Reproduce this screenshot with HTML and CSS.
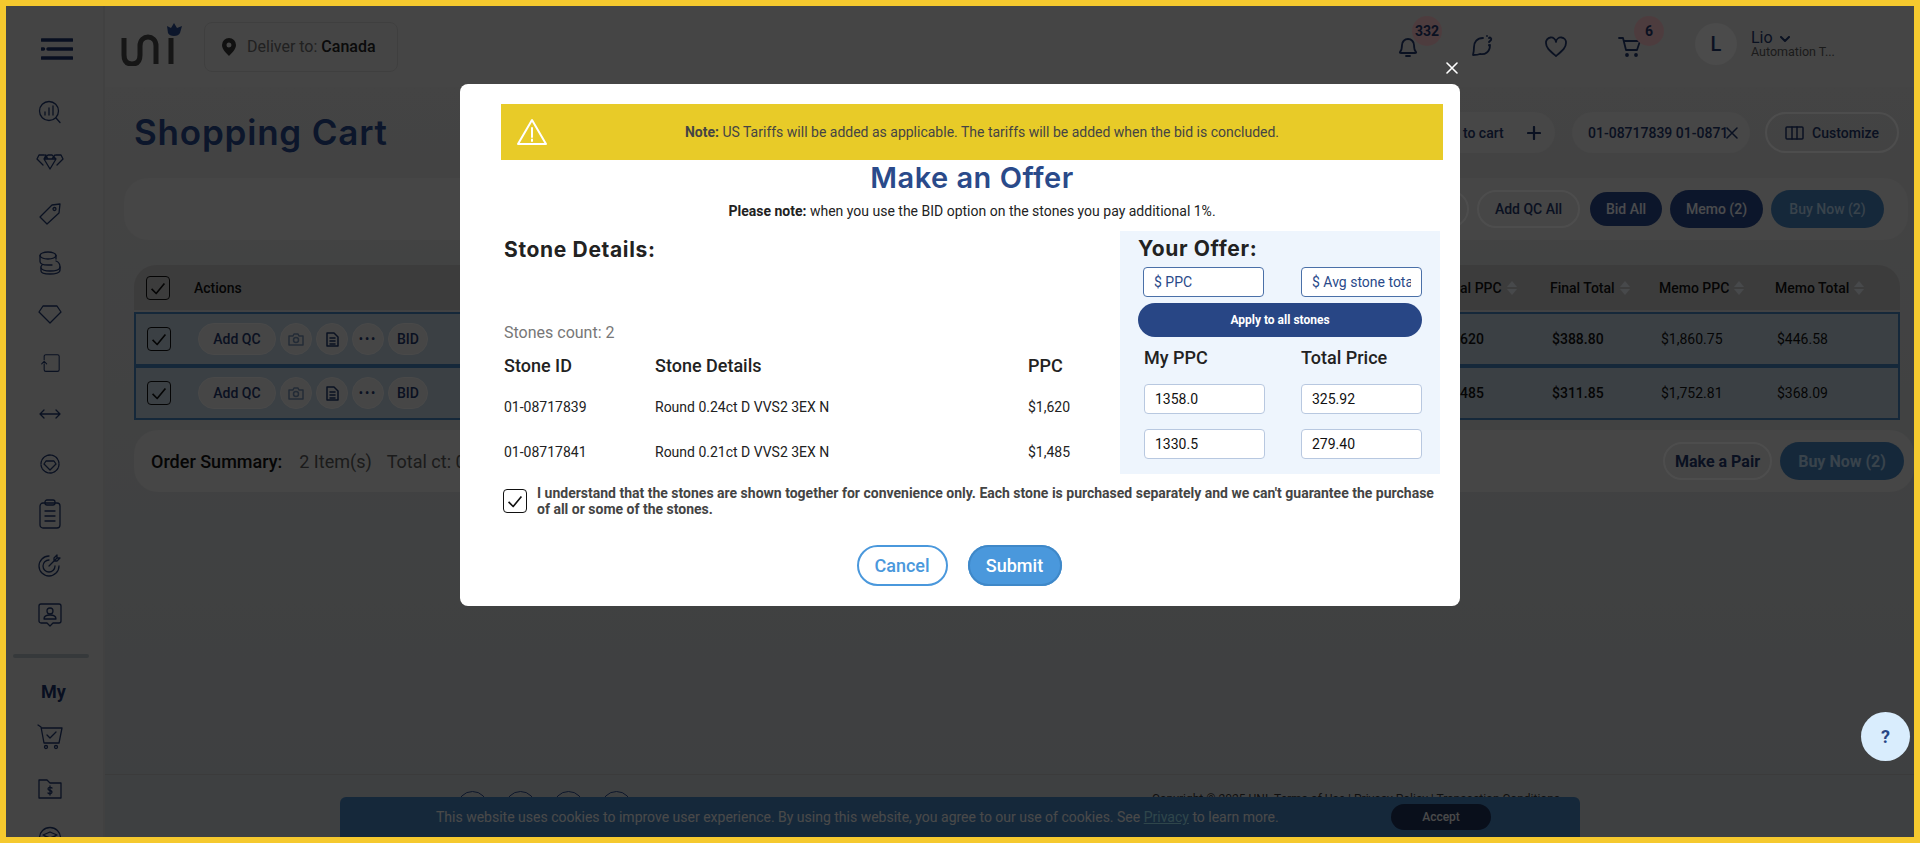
FILE: index.html
```html
<!DOCTYPE html>
<html lang="en">
<head>
  <meta charset="UTF-8" />
  <title>Shopping Cart</title>
  <link rel="stylesheet" href="styles.css">
</head>
<body>
  <div class="frame">
    <!-- sidebar -->
    <aside class="rail">
      <svg class="burger" width="32" height="22" viewBox="0 0 32 22"><path d="M1 2h30M7 11h24M1 20h30M1 11h1.500" /></svg>
      <div class="rail-list">
        <svg class="ico" viewBox="0 0 24 24"><circle cx="11" cy="11" r="9.500"/><path d="M18 18l4 4.500M7 15v-3M11 15V8M15 15V6"/></svg>
        <svg class="ico wide" viewBox="0 0 28 16"><path d="M8 1H3L1 5l6 6M20 1h5l2 4-6 6M8 5l4-4h4l4 4-6 10-6-10 2-4M8 5h12M9 1l3 4M19 1l-3 4"/></svg>
        <svg class="ico" viewBox="0 0 24 24"><path d="M2 16L14 4l8-1-1 9L9 23z"/><circle cx="16.500" cy="8" r="1.500"/></svg>
        <svg class="ico" viewBox="0 0 24 24"><ellipse cx="10" cy="4.500" rx="8" ry="3.500"/><path d="M2 4.500v6c0 2 3 3.500 8 3.500h4M18 4.500V8M4 14c-1 1-1.500 2-1 3 1 2 4 3 9 3s10-1 10-4-1-5-4-6"/><path d="M3 17v3c0 2 4 3 9 3s10-1 10-4v-3"/></svg>
        <svg class="ico" viewBox="0 0 24 24"><path d="M5 5h14l4 6-11 11L1 11z"/></svg>
        <svg class="ico sm" viewBox="0 0 24 24"><path d="M5 8V4a2 2 0 0 1 2-2h14a2 2 0 0 1 2 2v16a2 2 0 0 1-2 2H7a2 2 0 0 1-2-2v-7M2 13l3-3 3 3"/></svg>
        <svg class="ico" viewBox="0 0 24 24"><path d="M2 12h20M6 8l-4 4 4 4M18 8l4 4-4 4"/></svg>
        <svg class="ico" viewBox="0 0 24 24"><circle cx="12" cy="12" r="9" stroke-dasharray="3 1"/><path d="M8 9h8l2 3-6 6-6-6z"/></svg>
        <svg class="ico tall" viewBox="0 0 24 30"><rect x="2" y="4" width="20" height="25" rx="3"/><rect x="7" y="1" width="10" height="5" rx="2"/><path d="M7 12h10M7 17h10M7 22h10"/></svg>
        <svg class="ico" viewBox="0 0 24 24"><path d="M21 13a10 10 0 1 1-10-10M17 13a6 6 0 1 1-6-6M11 13l8-8M16 5l3-3v3h3l-3 3h-3z"/></svg>
        <svg class="ico" viewBox="0 0 24 24"><path d="M3 1h18a2 2 0 0 1 2 2v15a2 2 0 0 1-2 2h-6l-3 3-3-3H3a2 2 0 0 1-2-2V3a2 2 0 0 1 2-2z"/><circle cx="12" cy="8" r="3"/><path d="M6 16c0-3 3-4 6-4s6 1 6 4z"/></svg>
      </div>
      <div class="rail-rule"></div>
      <div class="rail-my">My</div>
      <div class="rail-list rail-my-list">
        <svg class="ico big" viewBox="0 0 26 26"><path d="M1 1l3 2 3 16h15l3-15H5M10 11l3 3 6-6"/><circle cx="9" cy="23" r="1.500"/><circle cx="19" cy="23" r="1.500"/></svg>
        <svg class="ico" viewBox="0 0 24 24"><path d="M1 4h8l3 3h11v15H1zM12 7h11"/><path d="M14 12c-1-1-4-1-4 1s4 1 4 3-3 2-4 1M12 10v9"/></svg>
        <svg class="ico" viewBox="0 0 24 24"><circle cx="12" cy="12" r="10.500"/><path d="M5 9l7-3 7 3-7 3zM7 11v6l5 2 5-2v-6"/></svg>
      </div>
    </aside>

    <div class="main">
      <!-- top bar -->
      <header class="topbar">
        <svg class="logo" width="62" height="44" viewBox="0 0 62 44">
          <path class="logo-uni" d="M3 16v17c0 6 3 9 8 9s8-3 8-9V24c0-6 4-9 8-9s8 3 8 9v18M50 16v26" />
          <circle class="logo-dot" cx="50" cy="10" r="2.500" />
          <path class="logo-crown" d="M46 4l4 2 3-5 3 5 5-2-2 7c-1 2-3 3-6 3s-5-1-6-3z" />
        </svg>
        <div class="deliver">
          <svg width="14" height="18" viewBox="0 0 14 18"><path class="pin" fill-rule="evenodd" d="M7 0a7 7 0 0 1 7 7c0 4-4 8-7 11-3-3-7-7-7-11a7 7 0 0 1 7-7zm0 4.500a2.500 2.500 0 1 0 0 5 2.500 2.500 0 0 0 0-5z"/></svg>
          <span>Deliver to: <b>Canada</b></span>
        </div>
        <div class="top-icons">
          <div class="top-ico">
            <svg width="22" height="22" viewBox="0 0 22 22"><path d="M3 16c2-2 2-4 2-7a6 6 0 0 1 12 0c0 3 0 5 2 7 .5 1 0 1-1 1H4c-1 0-1.500 0-1-1zM9 20h4"/></svg>
            <span class="badge">332</span>
          </div>
          <div class="top-ico">
            <svg width="22" height="24" viewBox="0 0 22 24"><path d="M12 3C6 3 3 7 3 12c0 2 0 4-1 8 3 0 5 0 7-1 5 1 10-2 10-9M16 1v0M18 3c1-1 3 0 2 2l-2 2M18 10v.500"/></svg>
          </div>
          <div class="top-ico">
            <svg width="24" height="22" viewBox="0 0 24 22"><path d="M12 20C6 15 2 12 2 7a5 5 0 0 1 10-1 5 5 0 0 1 10 1c0 5-4 8-10 13z"/></svg>
          </div>
          <div class="top-ico">
            <svg width="24" height="22" viewBox="0 0 24 22"><path d="M1 2h4l3 12h11l3-9H6"/><circle cx="9" cy="19" r="1"/><circle cx="18" cy="19" r="1"/></svg>
            <span class="badge">6</span>
          </div>
        </div>
        <div class="avatar">L</div>
        <div class="user">
          <div class="user-name">Lio <svg width="10" height="7" viewBox="0 0 10 7"><path d="M1 1l4 4 4-4"/></svg></div>
          <div class="user-role">Automation T...</div>
        </div>
      </header>

      <!-- page -->
      <main class="content">
        <div class="title-row">
          <h1>Shopping Cart</h1>
          <div class="title-tools">
            <div class="pill-light add-cart">Add to cart <svg width="14" height="14" viewBox="0 0 14 14"><path d="M7 1v12M1 7h12"/></svg></div>
            <div class="pill-light stone-search"><span>01-08717839 01-08717841</span><svg width="12" height="12" viewBox="0 0 12 12"><path d="M1 1l10 10M11 1L1 11"/></svg></div>
            <div class="pill customize"><svg width="19" height="14" viewBox="0 0 19 14"><rect x="1" y="1" width="17" height="12" rx="1"/><path d="M7 1v12M12 1v12"/></svg>Customize</div>
          </div>
        </div>

        <div class="bulk-bar">
          <div class="pill bulk-btn">Add All</div>
          <div class="pill bulk-btn">Add QC All</div>
          <div class="solid bid-all">Bid All</div>
          <div class="solid memo">Memo (2)</div>
          <div class="solid blue">Buy Now (2)</div>
        </div>

        <div class="cart-table">
          <div class="cart-head">
            <span class="check"><svg viewBox="0 0 24 24"><path d="M5 13l5 5 9-11"/></svg></span>
            <span class="head-actions">Actions</span>
            <span class="sort">Final PPC <i></i></span>
            <span class="sort">Final Total <i></i></span>
            <span class="sort">Memo PPC <i></i></span>
            <span class="sort">Memo Total <i></i></span>
          </div>
          <div class="cart-row">
            <span class="check"><svg viewBox="0 0 24 24"><path d="M5 13l5 5 9-11"/></svg></span>
            <div class="row-actions">
              <span class="act act-qc">Add QC</span>
              <span class="act"><svg width="16" height="14" viewBox="0 0 16 14"><path d="M1 4h4l1-2h4l1 2h4v9H1z"/><circle cx="8" cy="8" r="2.500"/></svg></span>
              <span class="act"><svg class="doc" width="13" height="15" viewBox="0 0 13 15"><path d="M1 1h7l4 4v9H1zM4 6h5M4 9h5M4 12h5"/></svg></span>
              <span class="act dots">•••</span>
              <span class="act act-bid">BID</span>
            </div>
            <b>$1,620</b><b>$388.80</b><span>$1,860.75</span><span>$446.58</span>
          </div>
          <div class="cart-row">
            <span class="check"><svg viewBox="0 0 24 24"><path d="M5 13l5 5 9-11"/></svg></span>
            <div class="row-actions">
              <span class="act act-qc">Add QC</span>
              <span class="act"><svg width="16" height="14" viewBox="0 0 16 14"><path d="M1 4h4l1-2h4l1 2h4v9H1z"/><circle cx="8" cy="8" r="2.500"/></svg></span>
              <span class="act"><svg class="doc" width="13" height="15" viewBox="0 0 13 15"><path d="M1 1h7l4 4v9H1zM4 6h5M4 9h5M4 12h5"/></svg></span>
              <span class="act dots">•••</span>
              <span class="act act-bid">BID</span>
            </div>
            <b>$1,485</b><b>$311.85</b><span>$1,752.81</span><span>$368.09</span>
          </div>
        </div>

        <div class="summary">
          <b>Order Summary:</b>
          <span class="sum-item">2 Item(s)</span>
          <span class="sum-item sum-ct">Total ct: 0.45</span>
          <div class="pill pair">Make a Pair</div>
          <div class="solid blue buy">Buy Now (2)</div>
        </div>
      </main>

      <footer class="foot">
        <div class="foot-social"><span></span><span></span><span></span><span></span></div>
        <div class="foot-copy">Copyright © 2025 UNI. Terms of Use | Privacy Policy | Transaction Conditions</div>
      </footer>
    </div>

    <div class="cookie">
      <span>This website uses cookies to improve user experience. By using this website, you agree to our use of cookies. See <u>Privacy</u> to learn more.</span>
      <span class="accept">Accept</span>
    </div>

    <div class="backdrop"></div>

    <svg class="close" width="12" height="12" viewBox="0 0 12 12"><path d="M1 1l10 10M11 1L1 11"/></svg>

    <!-- offer dialog -->
    <section class="modal">
      <div class="note-bar">
        <svg width="32" height="28" viewBox="0 0 32 28"><path d="M16 2L2 26h28zM16 10v9M16 21.500v1.500"/></svg>
        <p><b>Note:</b> US Tariffs will be added as applicable. The tariffs will be added when the bid is concluded.</p>
      </div>
      <h2>Make an Offer</h2>
      <p class="bid-note"><b>Please note:</b> when you use the BID option on the stones you pay additional 1%.</p>

      <div class="offer-grid">
        <div class="stones">
          <h3>Stone Details:</h3>
          <div class="stones-count">Stones count: 2</div>
          <div class="stones-table">
            <strong>Stone ID</strong><strong>Stone Details</strong><strong>PPC</strong>
            <span>01-08717839</span><span>Round 0.24ct D VVS2 3EX N</span><span>$1,620</span>
            <span>01-08717841</span><span>Round 0.21ct D VVS2 3EX N</span><span>$1,485</span>
          </div>
        </div>

        <div class="offer">
          <h3>Your Offer:</h3>
          <div class="offer-top">
            <input type="text" placeholder="$ PPC" />
            <input type="text" placeholder="$ Avg stone total" />
          </div>
          <button class="apply" type="button">Apply to all stones</button>
          <div class="offer-fields">
            <strong>My PPC</strong><strong>Total Price</strong>
            <input type="text" value="1358.0" /><input type="text" value="325.92" />
            <input type="text" value="1330.5" /><input type="text" value="279.40" />
          </div>
        </div>
      </div>

      <div class="agree">
        <span class="check"><svg viewBox="0 0 24 24"><path d="M5 13l5 5 9-11"/></svg></span>
        <p>I understand that the stones are shown together for convenience only. Each stone is purchased separately and we can't guarantee the purchase of all or some of the stones.</p>
      </div>

      <div class="modal-btns">
        <button class="btn-cancel" type="button">Cancel</button>
        <button class="btn-submit" type="button">Submit</button>
      </div>
    </section>

    <div class="help">?</div>
  </div>
</body>
</html>
```

FILE: styles.css
```css
* {
  box-sizing: border-box;
}
html, body {
  margin: 0;
  height: 100%;
}
body {
  font-family: Roboto, 'Liberation Sans', sans-serif;
  font-size: 14px;
  color: #111;
  overflow: hidden;
}
svg {
  fill: none;
  stroke: #1f3568;
  stroke-width: 1.5;
  stroke-linecap: round;
  stroke-linejoin: round;
  flex: none;
}
h1, h2, h3, p {
  margin: 0;
}

.frame {
  position: relative;
  display: flex;
  height: 100vh;
  border: 6px solid #f5c92e;
  overflow: hidden;
  background: #d0d0d0;
}

/* sidebar */
.rail {
  width: 99px;
  flex: none;
  display: flex;
  flex-direction: column;
  align-items: center;
  padding-top: 32px;
  background: #d4d4d4;
  border-right: 2px solid #cbcbcb;
}
.rail > * {
  flex: none;
}
.burger {
  margin-left: 5px;
  stroke: #1a2f63;
  stroke-width: 3.5;
}
.rail-list {
  display: flex;
  flex-direction: column;
  align-items: center;
  gap: 26.300px;
  margin-top: 40px;
  margin-right: 10px;
}
.ico {
  width: 24px;
  height: 24px;
  stroke-width: 1.300;
}
.ico.wide {
  width: 28px;
  height: 16px;
  margin: 4px 0;
}
.ico.tall {
  height: 30px;
  margin: -3px 0;
}
.ico.big {
  width: 26px;
  height: 26px;
}
.ico.sm {
  width: 20px;
  height: 20px;
  margin: 2px 0;
}
.rail-rule {
  width: 76px;
  height: 4px;
  margin: 27px 0 0 -8px;
  border-radius: 2px;
  background: #a7b0b8;
}
.rail-my {
  margin: 23px 0 0 -2px;
  font-size: 18px;
  font-weight: 700;
  color: #1a2f63;
}
.rail-my-list {
  gap: 26px;
  margin-top: 22px;
}

.main {
  flex: 1;
  min-width: 0;
  display: flex;
  flex-direction: column;
}

/* top bar */
.topbar {
  height: 81px;
  flex: none;
  display: flex;
  align-items: center;
  padding: 0 0 0 16px;
  background: #d6d6d6;
}
.logo {
  margin-top: -5px;
}
.logo-uni {
  stroke: #444;
  stroke-width: 5;
  stroke-linecap: butt;
}
.logo-dot {
  fill: #444;
  stroke: none;
}
.logo-crown {
  fill: #284685;
  stroke: none;
}
.deliver {
  display: flex;
  align-items: center;
  gap: 11px;
  width: 194px;
  height: 50px;
  margin-left: 21px;
  padding-left: 17px;
  border: 1.500px solid #c4c4c4;
  border-radius: 8px;
  font-size: 16px;
  color: #666;
}
.deliver b {
  color: #222;
  font-weight: 500;
}
.pin {
  fill: #333;
  stroke: none;
}
.top-icons {
  display: flex;
  margin-left: auto;
}
.top-ico {
  position: relative;
  width: 74px;
  height: 24px;
  display: flex;
  align-items: center;
  justify-content: center;
}
.top-ico svg {
  stroke-width: 1.800;
}
.badge {
  position: absolute;
  left: 41px;
  top: -19px;
  width: 30px;
  height: 30px;
  display: flex;
  align-items: center;
  justify-content: center;
  border-radius: 50%;
  background: #f0bcc2;
  font-size: 14px;
  font-weight: 700;
  color: #1f3568;
}
.avatar {
  width: 42px;
  height: 42px;
  margin: -6px 0 0 28px;
  display: flex;
  align-items: center;
  justify-content: center;
  border-radius: 50%;
  background: #e8e8e8;
  font-size: 20px;
  font-weight: 500;
  color: #1f3568;
}
.user {
  width: 163px;
  margin: -6px 0 0 14px;
  color: #1f3568;
}
.user-name {
  font-size: 16px;
  line-height: 15px;
}
.user-name svg {
  margin-left: 3px;
  stroke-width: 2;
}
.user-role {
  font-size: 12.500px;
  line-height: 13px;
  color: #555;
}

/* page */
.content {
  flex: 1;
  padding: 25px 0 0 29px;
  background: linear-gradient(#d2d2d2, #c2c6c9);
}
.title-row {
  display: flex;
  justify-content: space-between;
  align-items: center;
  height: 41px;
  margin-right: 15px;
}
h1 {
  margin-bottom: 2px;
  font-family: Inter, sans-serif;
  font-size: 35px;
  font-weight: 600;
  letter-spacing: .8px;
  color: #284685;
}
.title-tools {
  display: flex;
  align-items: center;
}
.pill, .pill-light, .solid {
  display: flex;
  align-items: center;
  justify-content: center;
  border-radius: 24px;
  font-weight: 500;
  color: #1f3568;
}
.pill {
  border: 2px solid #f0f0f0;
  background: #dadada;
}
.pill-light {
  background: #dbdbdb;
}
.add-cart {
  gap: 23px;
  width: 148px;
  height: 41px;
  margin-right: 17px;
  padding-left: 13px;
}
.add-cart svg {
  stroke-width: 2.200;
}
.stone-search {
  width: 178px;
  height: 41px;
  margin-right: 15px;
  justify-content: flex-start;
  padding-left: 16px;
}
.stone-search span {
  width: 138px;
  white-space: nowrap;
  overflow: hidden;
}
.customize {
  gap: 8px;
  width: 134px;
  height: 41px;
  background: transparent;
}
.bulk-bar {
  display: flex;
  align-items: center;
  justify-content: flex-end;
  gap: 8px;
  height: 62px;
  margin: 25px 6px 0 -10px;
  padding-right: 24px;
  background: #d8d8d8;
  border-radius: 24px;
}
.bulk-btn {
  height: 38px;
  width: 103px;
  background: transparent;
}
.solid {
  height: 38px;
  background: #284685;
  color: #e6e9f0;
}
.bid-all {
  width: 72px;
  height: 34px;
  margin-left: 2px;
}
.memo {
  width: 93px;
}
.blue {
  width: 113px;
  background: #427db5;
  color: #b0d0ea;
}

/* cart table */
.cart-table {
  margin: 25px 14px 0 0;
}
.cart-head, .cart-row {
  display: grid;
  align-items: center;
}
.cart-head {
  height: 45px;
  padding-left: 12px;
  margin-bottom: 2px;
  border-radius: 22px 22px 0 0;
  background: #bcbcbc;
  font-weight: 500;
  color: #111;
  grid-template-columns: 48px 1fr 109px 109px 116px 125px;
}
.sort {
  display: flex;
  align-items: center;
  gap: 5px;
  white-space: nowrap;
}
.sort i {
  display: flex;
  flex-direction: column;
  gap: 2px;
}
.sort i::before, .sort i::after {
  content: '';
  border-left: 5.500px solid transparent;
  border-right: 5.500px solid transparent;
}
.sort i::before {
  border-bottom: 6px solid #dde2e8;
}
.sort i::after {
  border-top: 6px solid #dde2e8;
}
.cart-row {
  height: 54px;
  padding-left: 11px;
  border: 2px solid #427db5;
  background: #b8c8d4;
  grid-template-columns: 51px 1fr 111px 109px 116px 121px;
}
.cart-row b {
  font-weight: 500;
}
.check {
  width: 24px;
  height: 24px;
  display: block;
  border: 1.500px solid #111;
  border-radius: 4px;
  background: #fff;
}
.check svg {
  display: block;
  stroke: #111;
  stroke-width: 1.800;
  stroke-linecap: butt;
}
.cart-head .check, .cart-row .check {
  background: transparent;
}
.row-actions {
  display: flex;
  gap: 4px;
}
.act {
  width: 32px;
  height: 32px;
  display: flex;
  align-items: center;
  justify-content: center;
  border: 1.500px solid #e2e2e2;
  border-radius: 16px;
  background: #d8d8d8;
  font-weight: 500;
  font-size: 14px;
  color: #1f3568;
}
.act svg {
  stroke: #6e87a8;
}
.act svg.doc {
  stroke: #1f3568;
}
.act-qc {
  width: 78px;
}
.act-bid {
  width: 40px;
}
.dots {
  font-size: 12px;
  letter-spacing: 2px;
}

.summary {
  display: flex;
  align-items: center;
  height: 62px;
  margin: 10px 0 0 0;
  padding: 0 10px 0 17px;
  border-radius: 24px;
  background: #d8d8d8;
  font-size: 18px;
}
.summary b {
  font-weight: 500;
}
.sum-item {
  margin-left: 17px;
  color: #555;
}
.sum-ct {
  margin-left: 15px;
}
.pair {
  width: 109px;
  height: 38px;
  margin-left: auto;
  font-size: 16px;
  font-weight: 700;
  background: transparent;
}
.buy {
  width: 124px;
  margin-left: 8px;
  font-size: 16px;
  font-weight: 700;
}

/* footer */
.foot {
  height: 63px;
  flex: none;
  display: flex;
  padding: 16px 48px 0 352px;
  border-top: 1px solid #b8b8b8;
  background: #c2c6c9;
  font-size: 12px;
}
.foot-social {
  display: flex;
  gap: 17px;
}
.foot-social span {
  width: 31px;
  height: 31px;
  border: 1.500px solid #284685;
  border-radius: 50%;
}
.foot-copy {
  margin: 1px 306px 0 auto;
  color: #333;
}

.cookie {
  position: absolute;
  left: 334px;
  bottom: 0;
  width: 1240px;
  height: 40px;
  display: flex;
  align-items: center;
  padding: 0 89px 0 96px;
  justify-content: space-between;
  border-radius: 6px 6px 0 0;
  background: #427db5;
  color: #e4e4e4;
}
.cookie u {
  color: #94d8e8;
}
.accept {
  width: 100px;
  height: 26px;
  display: flex;
  align-items: center;
  justify-content: center;
  border-radius: 13px;
  background: #1c2f55;
  font-size: 12px;
  font-weight: 500;
}

/* dialog layer */
.backdrop {
  position: absolute;
  inset: 0;
  background: rgba(0, 0, 0, .68);
}
.close {
  position: absolute;
  left: 1440px;
  top: 56px;
  stroke: #fff;
  stroke-width: 1.600;
}
.modal {
  position: absolute;
  left: 454px;
  top: 78px;
  width: 1000px;
  height: 522px;
  padding: 20px 17px 0 41px;
  border-radius: 8px;
  background: #fff;
}
.note-bar {
  display: flex;
  align-items: center;
  height: 56px;
  padding: 0 0 0 15px;
  background: #e8cb28;
  color: #444;
}
.note-bar svg {
  stroke: #fff;
  stroke-width: 2;
}
.note-bar p {
  flex: 1;
  margin-right: 27px;
  text-align: center;
  font-size: 14px;
}
.note-bar b, .bid-note b {
  font-weight: 700;
}
h2 {
  height: 34px;
  margin-top: 1px;
  font-family: Inter, sans-serif;
  font-size: 29px;
  font-weight: 600;
  letter-spacing: .5px;
  line-height: 34px;
  text-align: center;
  color: #2a4a8a;
}
.bid-note {
  margin-top: 6px;
  line-height: 20px;
  text-align: center;
  color: #222;
}
.offer-grid {
  display: grid;
  grid-template-columns: 616px 320px;
  height: 243px;
  margin: 10px 0 0 3px;
}
h3 {
  height: 24px;
  font-family: Inter, sans-serif;
  font-size: 21px;
  font-weight: 700;
  letter-spacing: .65px;
  line-height: 24px;
  color: #222;
}
.stones {
  padding-top: 7px;
}
.stones-count {
  margin-top: 61px;
  font-size: 16px;
  line-height: 20px;
  color: #777;
}
.stones-table {
  display: grid;
  grid-template-columns: 151px 373px auto;
  grid-template-rows: 24px 45px 45px;
  align-items: center;
  margin-top: 10px;
  font-size: 14px;
  color: #222;
}
.stones-table span {
  margin-top: 14px;
}
strong {
  font-size: 18px;
  font-weight: 500;
  color: #222;
}
.offer {
  padding: 6px 18px 0;
  background: #eef5fd;
}
.offer input {
  height: 30px;
  min-width: 0;
  padding: 0 10px;
  border-radius: 4px;
  background: #fff;
  font-family: Roboto, sans-serif;
  font-size: 14px;
}
.offer-top {
  display: grid;
  grid-template-columns: 121px 121px;
  column-gap: 37px;
  margin: 6px 0 0 5px;
}
.offer-top input {
  border: 1px solid #4a70a8;
}
.offer-top input::placeholder {
  color: #2a4a8a;
  opacity: 1;
}
.apply {
  display: block;
  width: 284px;
  height: 34px;
  margin-top: 6px;
  border: 0;
  border-radius: 17px;
  background: #284685;
  color: #fff;
  font-family: Roboto, sans-serif;
  font-size: 12px;
  font-weight: 700;
}
.offer-fields {
  display: grid;
  grid-template-columns: 121px 121px;
  column-gap: 36px;
  row-gap: 15px;
  margin: 9px 0 0 6px;
}
.offer-fields strong {
  margin-bottom: -1px;
  line-height: 24px;
}
.offer-fields input {
  border: 1px solid #b8c8e0;
  color: #111;
}
.agree {
  display: flex;
  gap: 10px;
  margin: 11px 0 0 2px;
  padding-right: 6px;
}
.agree .check {
  margin-top: 4px;
  flex: none;
}
.agree p {
  font-weight: 700;
  line-height: 16px;
  color: #444;
}
.modal-btns {
  display: flex;
  justify-content: center;
  gap: 20px;
  margin-top: 28px;
  padding-right: 26px;
}
.modal-btns button {
  height: 41px;
  border-radius: 21px;
  font-family: Roboto, sans-serif;
  font-size: 18px;
  font-weight: 500;
}
.btn-cancel {
  width: 91px;
  border: 2px solid #4a98dc;
  background: #fff;
  color: #4a98dc;
}
.btn-submit {
  width: 94px;
  border: 0;
  background: #4a98dc;
  color: #fff;
  box-shadow: inset 0 0 0 2px #3f88c8;
}
.help {
  position: absolute;
  left: 1855px;
  top: 706px;
  width: 49px;
  height: 49px;
  display: flex;
  align-items: center;
  justify-content: center;
  border-radius: 50%;
  background: #d9edfd;
  font-size: 18px;
  font-weight: 700;
  color: #284685;
}
```
